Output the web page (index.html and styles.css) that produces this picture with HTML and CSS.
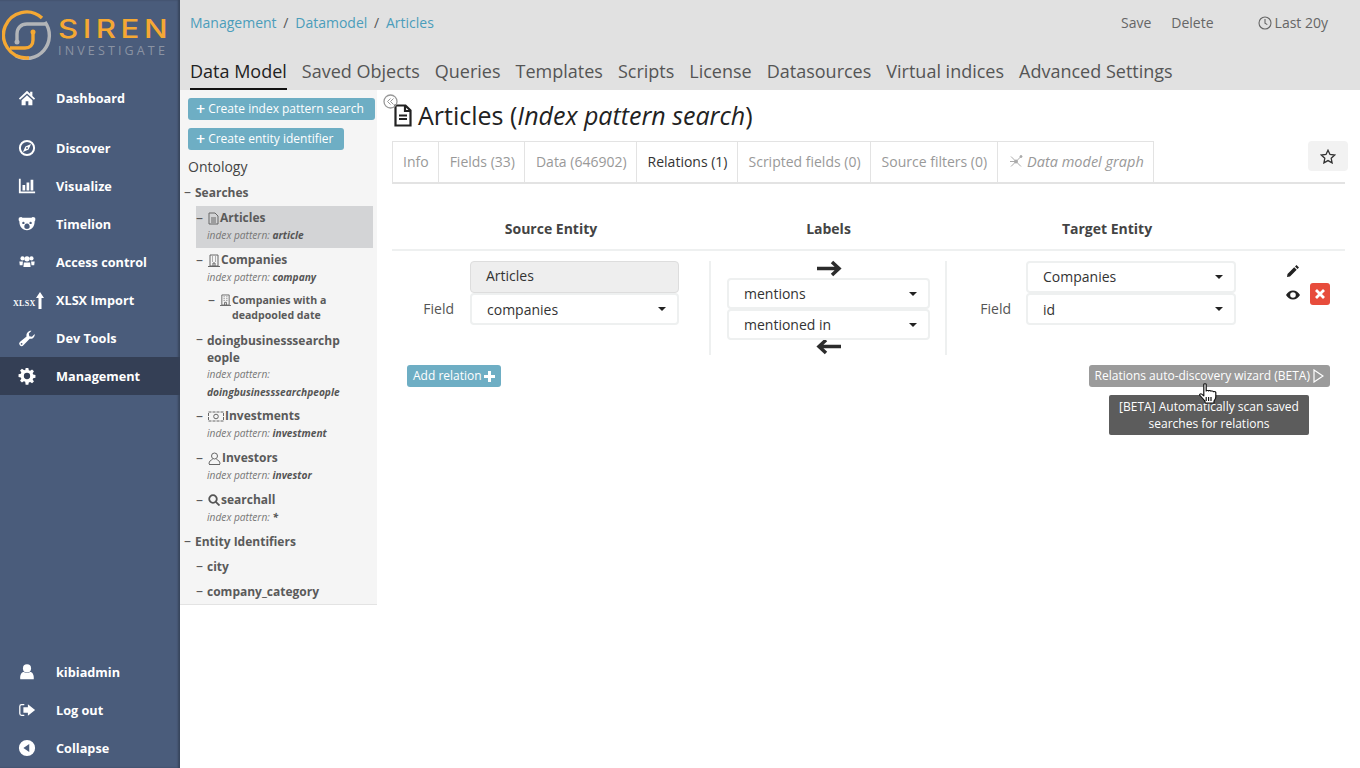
FILE: index.html
```html
<!DOCTYPE html>
<html lang="en">
<head>
<meta charset="UTF-8">
<title>Articles - Siren Investigate</title>
<link rel="stylesheet" href="styles.css">
</head>
<body>
<aside class="sidebar">
  <div class="logo">
    <svg class="logo-mark" width="50" height="50" viewBox="0 0 50 50" fill="none" stroke-width="3.400">
      <path d="M43 12A23 23 0 0 1 14 46" stroke="#b3b5b8"/>
      <path d="M40 8A23 23 0 1 0 24 48H27" stroke="#f5a833"/>
      <path d="M45 14H25C19 14 15 18 15 24V32" stroke="#b3b5b8"/>
      <path d="M31 22V30C31 35 28 38 23 38H8" stroke="#f5a833"/>
      <circle cx="31" cy="22" r="2.500" fill="#f5a833" stroke="none"/>
      <circle cx="15" cy="32" r="2.500" fill="#b3b5b8" stroke="none"/>
    </svg>
    <div class="logo-text">
      <div class="logo-siren">SIREN</div>
      <div class="logo-sub">INVESTIGATE</div>
    </div>
  </div>
  <nav class="nav-top">
    <a class="nav-item nav-first">
      <svg class="nav-icon" viewBox="0 0 20 20"><path d="M10 2 1 10.500 2.300 12 10 5l7.700 7L19 10.500 16 7.700V3h-2.500v2.400zM4 12.500V18h4.500v-4.500h3V18H16v-5.500L10 7z"/></svg>
      <span>Dashboard</span>
    </a>
    <a class="nav-item">
      <svg class="nav-icon" viewBox="0 0 20 20"><path fill-rule="evenodd" d="M10 1a9 9 0 1 1 0 18 9 9 0 0 1 0-18zm0 2.200a6.800 6.800 0 1 0 0 13.600 6.800 6.800 0 0 0 0-13.600zM14.500 5.500l-2.700 6.300-6.300 2.700 2.700-6.300zM10 9a1 1 0 1 0 0 2 1 1 0 0 0 0-2z"/></svg>
      <span>Discover</span>
    </a>
    <a class="nav-item">
      <svg class="nav-icon" viewBox="0 0 20 20"><path d="M1 2h2v14h16v2H1zM5 9h3v6H5zM9.500 6h3v9h-3zM14 3h3v12h-3z"/></svg>
      <span>Visualize</span>
    </a>
    <a class="nav-item">
      <svg class="nav-icon" viewBox="0 0 20 20"><path fill-rule="evenodd" d="M1 3c2-1 3-1 4 0h10c1-1 2-1 4 0 .5 2 .3 3-.5 4 0 6-3.500 10-8.500 10S1.500 13 1.500 7C.7 6 .5 5 1 3zm5 4.500a1.300 1.300 0 1 0 0 2.600 1.300 1.300 0 0 0 0-2.600zm8 0a1.300 1.300 0 1 0 0 2.600 1.300 1.300 0 0 0 0-2.600zM10 9.500c-2 0-3 2-3 3.500s1.500 2.500 3 2.500 3-1 3-2.500-1-3.500-3-3.500z"/></svg>
      <span>Timelion</span>
    </a>
    <a class="nav-item">
      <svg class="nav-icon" viewBox="0 0 20 20"><circle cx="5" cy="6" r="2.300"/><circle cx="15" cy="6" r="2.300"/><circle cx="10" cy="6.500" r="3"/><path d="M1.500 9.500h4l-.5 4H2zM14.500 9.500h4L18 13.500h-3zM6.500 10.500h7L14 15.500H6z"/></svg>
      <span>Access control</span>
    </a>
    <a class="nav-item">
      <span class="xlsx-icon"><span class="xlsx-text">XLSX</span><svg width="8" height="17" viewBox="0 0 8 17"><path d="M4 0 8 6H5.500V17h-3V6H0z"/></svg></span>
      <span>XLSX Import</span>
    </a>
    <a class="nav-item">
      <svg class="nav-icon" viewBox="0 0 20 20"><path fill-rule="evenodd" d="M18.500 5.500c.5 3-2 6-5.500 5.300L6 18a2.500 2.500 0 0 1-4-3.500l7.500-6.300C8.700 4.500 12 1.500 15 2l-3 3 .5 3 3 .5zM4 15.500a1 1 0 1 0 0 2 1 1 0 0 0 0-2z"/></svg>
      <span>Dev Tools</span>
    </a>
    <a class="nav-item nav-active">
      <svg class="nav-icon" viewBox="0 0 20 20"><path fill-rule="evenodd" d="M8.500 1h3l.5 2.500 1.500.6 2.100-1.400 2.100 2.100-1.400 2.100.6 1.500 2.500.5v3l-2.500.5-.6 1.500 1.400 2.100-2.100 2.100-2.100-1.400-1.500.6-.5 2.500h-3L8 16.500l-1.500-.6-2.100 1.400-2.100-2.100 1.400-2.100-.6-1.500L.6 11.100v-3l2.500-.5.6-1.500-1.400-2.100 2.100-2.100 2.100 1.400L8 3.500zM10 6.500a3.500 3.500 0 1 0 0 7 3.500 3.500 0 0 0 0-7z"/></svg>
      <span>Management</span>
    </a>
  </nav>
  <nav class="nav-bottom">
    <a class="nav-item">
      <svg class="nav-icon" viewBox="0 0 20 20"><circle cx="10" cy="6" r="4.500"/><path d="M2.500 18c-.5-5 1.500-8 4-8 2 1.500 5 1.500 7 0 2.500 0 4.500 3 4 8z"/></svg>
      <span>kibiadmin</span>
    </a>
    <a class="nav-item">
      <svg class="nav-icon" viewBox="0 0 20 20"><path d="M7 4H4a2 2 0 0 0-2 2v8a2 2 0 0 0 2 2h3" fill="none" stroke="#fff" stroke-width="1.400"/><path d="M11 3.500 19 10l-8 6.500V13H6V7h5z"/></svg>
      <span>Log out</span>
    </a>
    <a class="nav-item">
      <svg class="nav-icon" viewBox="0 0 20 20"><path fill-rule="evenodd" d="M10 1a9 9 0 1 1 0 18 9 9 0 0 1 0-18zm2.500 4.500L6 10l6.500 4.500z"/></svg>
      <span>Collapse</span>
    </a>
  </nav>
</aside>

<div class="content">
  <header class="topbar">
    <div class="topbar-row">
      <div class="breadcrumbs">
        <a>Management</a><span class="sep">/</span><a>Datamodel</a><span class="sep">/</span><a>Articles</a>
      </div>
      <div class="top-actions">
        <a>Save</a>
        <a>Delete</a>
        <a class="timepicker">
          <svg width="14" height="14" viewBox="0 0 14 14" fill="none" stroke="#666" stroke-width="1.100"><circle cx="7" cy="7" r="6"/><path d="M7 3v4.200l2.300 1.400"/></svg>
          Last 20y
        </a>
      </div>
    </div>
    <div class="section-tabs">
      <a class="section-active">Data Model</a>
      <a>Saved Objects</a>
      <a>Queries</a>
      <a>Templates</a>
      <a>Scripts</a>
      <a>License</a>
      <a>Datasources</a>
      <a>Virtual indices</a>
      <a>Advanced Settings</a>
    </div>
  </header>

  <div class="workspace">
    <div class="panel">
      <div class="panel-buttons">
        <button class="btn btn-blue"><span class="plus">+</span>Create index pattern search</button>
        <button class="btn btn-blue"><span class="plus">+</span>Create entity identifier</button>
      </div>
      <div class="ontology">Ontology</div>
      <div class="group-title"><span class="dash">&ndash;</span>Searches</div>
      <div class="node node-selected">
        <div class="node-name"><span class="dash">&ndash;</span><svg class="tree-icon" width="11" height="13" viewBox="0 0 11 13" fill="none" stroke="#666"><path d="M1 1h6l3 3v8H1zM3 6h5M3 8h5M3 10h5"/></svg>Articles</div>
        <div class="node-sub">index pattern: <b>article</b></div>
      </div>
      <div class="node node-parent">
        <div class="node-name"><span class="dash">&ndash;</span><svg class="tree-icon" width="12" height="13" viewBox="0 0 12 13" fill="none" stroke="#666"><path d="M2 1h8v11H2zM0 12.500h12M4 3h1M7 3h1M4 5h1M7 5h1M4 7h1M7 7h1M5 12v-3h2v3"/></svg>Companies</div>
        <div class="node-sub">index pattern: <b>company</b></div>
        <div class="child-name"><span class="dash">&ndash;</span><svg class="tree-icon child-icon" width="11" height="12" viewBox="0 0 12 13" fill="none" stroke="#666"><path d="M2 1h8v11H2zM0 12.500h12M4 3h1M7 3h1M4 5h1M7 5h1M4 7h1M7 7h1M5 12v-3h2v3"/></svg><span>Companies with a deadpooled date</span></div>
      </div>
      <div class="node node-long">
        <div class="node-name"><span class="dash">&ndash;</span><span>doingbusinesssearchp<br>eople</span></div>
        <div class="node-sub">index pattern:<br><b>doingbusinesssearchpeople</b></div>
      </div>
      <div class="node">
        <div class="node-name"><span class="dash">&ndash;</span><svg class="tree-icon" width="16" height="11" viewBox="0 0 16 11" fill="none" stroke="#666"><rect x=".5" y="1" width="15" height="9" stroke-dasharray="3 1"/><circle cx="8" cy="5.500" r="2.300"/></svg>Investments</div>
        <div class="node-sub">index pattern: <b>investment</b></div>
      </div>
      <div class="node">
        <div class="node-name"><span class="dash">&ndash;</span><svg class="tree-icon" width="13" height="13" viewBox="0 0 13 13" fill="none" stroke="#666"><circle cx="6.500" cy="4" r="3"/><path d="M1 12c0-3 2-4 3.500-4.500M12 12c0-3-2-4-3.500-4.500M1 12.500h11"/></svg>Investors</div>
        <div class="node-sub">index pattern: <b>investor</b></div>
      </div>
      <div class="node">
        <div class="node-name"><span class="dash">&ndash;</span><svg class="tree-icon" width="12" height="12" viewBox="0 0 12 12" fill="none" stroke="#555" stroke-width="1.800"><circle cx="5" cy="5" r="3.800"/><path d="M7.800 7.800 11.500 11.500"/></svg>searchall</div>
        <div class="node-sub">index pattern: <b>*</b></div>
      </div>
      <div class="group-title group-entity"><span class="dash">&ndash;</span>Entity Identifiers</div>
      <div class="leaf"><span class="dash">&ndash;</span>city</div>
      <div class="leaf"><span class="dash">&ndash;</span>company_category</div>
    </div>
    <svg class="panel-toggle" width="15" height="15" viewBox="0 0 15 15" fill="none" stroke="#999"><circle cx="7.500" cy="7.500" r="6.500" stroke-width="1.300"/><path d="M7.500 4.500 4.500 7.500l3 3M10.500 4.500l-3 3 3 3"/></svg>

    <main class="main">
      <h1 class="page-title">
        <svg width="18" height="23" viewBox="0 0 18 23" fill="none" stroke="#222" stroke-width="2.200"><path d="M1.500 1.500h10l5 5v15h-15zM11 1.500v5.500h5.500"/><path d="M5 11.500h8M5 15h8"/></svg>
        <span>Articles (<em>Index pattern search</em>)</span>
      </h1>
      <div class="tabs-row">
        <div class="tab tab-first">Info</div>
        <div class="tab">Fields (33)</div>
        <div class="tab">Data (646902)</div>
        <div class="tab tab-active">Relations (1)</div>
        <div class="tab">Scripted fields (0)</div>
        <div class="tab tab-filters">Source filters (0)</div>
        <div class="tab tab-graph">
          <svg width="14" height="13" viewBox="0 0 14 13" fill="none" stroke="#aaa"><path d="M2 1.500 12 11.500M2 11.500 12 1.500M7 6.500 1 6.500"/><circle cx="7" cy="6.500" r="1.500" fill="#aaa"/><circle cx="12" cy="1.500" r="1" fill="#aaa"/></svg>
          <em>Data model graph</em>
        </div>
        <button class="star-btn"><svg width="16" height="15" viewBox="0 0 16 15" fill="none" stroke="#333" stroke-width="1.300"><path d="M8 1.200 10 5.500l4.700.6-3.500 3.200.9 4.600L8 11.600l-4.100 2.300.9-4.600L1.300 6.100 6 5.500z"/></svg></button>
      </div>

      <div class="relation-head">
        <div>Source Entity</div>
        <div>Labels</div>
        <div>Target Entity</div>
        <div></div>
      </div>

      <div class="relation-row">
        <div class="entity-col source-col">
          <div></div>
          <div class="select select-static">Articles</div>
          <div class="field-label">Field</div>
          <div class="select">companies</div>
        </div>
        <div class="labels-col">
          <svg class="arrow arrow-out" width="26" height="16" viewBox="0 0 26 16" fill="none" stroke="#2b2b2b" stroke-width="3.500"><path d="M1 8h22M16 1.500 23 8l-7 6.500"/></svg>
          <div class="select select-small">mentions</div>
          <div class="select select-small">mentioned in</div>
          <svg class="arrow arrow-back" width="26" height="16" viewBox="0 0 26 16" fill="none" stroke="#2b2b2b" stroke-width="3.500"><path d="M25 8H3M10 1.500 3 8l7 6.500"/></svg>
        </div>
        <div class="entity-col target-col">
          <div></div>
          <div class="select select-top">Companies</div>
          <div class="field-label">Field</div>
          <div class="select">id</div>
        </div>
        <div class="actions-col">
          <div class="action-icons">
            <svg width="14" height="14" viewBox="0 0 14 14"><path fill="#222" d="M10.500 1 13 3.500 11.500 5 9 2.500zM8.200 3.300l2.500 2.500L4 12.500 1 13l.5-3z"/></svg>
            <svg width="14" height="14" viewBox="0 0 14 14"><path fill="#222" fill-rule="evenodd" d="M7 2.500c3 0 5.500 2 7 4.500-1.500 2.500-4 4.500-7 4.500S1.500 9.500 0 7c1.500-2.500 4-4.500 7-4.500zm0 1.700a2.800 2.800 0 1 0 0 5.600 2.800 2.800 0 0 0 0-5.600z"/></svg>
          </div>
          <button class="delete-btn"><svg width="10" height="10" viewBox="0 0 10 10" stroke="#fff" stroke-width="2.800"><path d="M1 1l8 8M9 1l-8 8"/></svg></button>
        </div>
      </div>

      <div class="relation-foot">
        <button class="btn btn-blue btn-add">Add relation<svg width="11" height="11" viewBox="0 0 11 11" stroke="#fff" stroke-width="3"><path d="M5.500 0v11M0 5.500h11"/></svg></button>
        <button class="btn btn-grey">Relations auto-discovery wizard (BETA)<svg width="11" height="14" viewBox="0 0 11 14" fill="none" stroke="#fff" stroke-width="1.200"><path d="M1 1l9 6-9 6z"/></svg></button>
        <div class="tooltip">[BETA] Automatically scan saved searches for relations</div>
        <svg class="cursor" width="18" height="21" viewBox="0 0 15 21" preserveAspectRatio="none"><path fill="#fff" stroke="#111" stroke-linejoin="round" d="M4 1.500c0-1 2-1 2 0V8c0-.8 2-.8 2 0 0-.8 2-.8 2 .3 0-.6 2-.6 2 .5 0-.5 2-.3 2 .8V14c0 2-1 3-1.500 4v2H5v-2L.8 12.500c-.8-1 .5-2.200 1.500-1.300L4 13z"/><path stroke="#111" d="M6 14v4M8 14v4M10 14v4"/></svg>
      </div>
    </main>
  </div>
</div>
</body>
</html>
```

FILE: styles.css
```css
* {
  box-sizing: border-box;
}

html, body {
  height: 100%;
}

body {
  margin: 0;
  display: flex;
  height: 100vh;
  overflow: hidden;
  font-family: "Open Sans", Arial, sans-serif;
  font-size: 14px;
  color: #333;
  background: #fff;
}

/* left navigation */
.sidebar {
  width: 180px;
  flex: none;
  display: flex;
  flex-direction: column;
  background: #4a5c7b;
  box-shadow: inset -2px 0 2px rgba(0, 0, 0, 0.25);
}

.logo {
  height: 79px;
  display: flex;
  padding: 10px 0 0 2px;
}

.logo-mark {
  flex: none;
}

.logo-text {
  margin-left: 6px;
}

.logo-siren {
  font-family: Inter, "Open Sans", sans-serif;
  font-size: 26px;
  font-weight: 500;
  line-height: 28px;
  margin-top: 5px;
  letter-spacing: 3.800px;
  color: #f5a833;
  transform: scaleX(1.2);
  transform-origin: left;
}

.logo-sub {
  font-size: 12.500px;
  line-height: 14px;
  margin-top: 1px;
  letter-spacing: 3.150px;
  color: #8a93a3;
}

.nav-item {
  height: 38px;
  display: flex;
  align-items: center;
  font-size: 12.700px;
  font-weight: 700;
  color: #fff;
}

.nav-item > span:last-child {
  margin-left: 20px;
}

.nav-first {
  margin-bottom: 12px;
}

.nav-active {
  background: #343f55;
}

.nav-icon {
  width: 18px;
  height: 18px;
  margin-left: 18px;
  flex: none;
  fill: #fff;
}

.xlsx-icon {
  width: 37px;
  margin-left: 13px;
  margin-right: -19px;
  display: flex;
  align-items: flex-end;
  fill: #fff;
}

.nav-item > .xlsx-icon + span {
  margin-left: 25px;
}

.xlsx-text {
  font-family: "Liberation Serif", serif;
  font-size: 8px;
  line-height: 10px;
  letter-spacing: 0.300px;
}

.nav-bottom {
  margin-top: auto;
  padding-bottom: 1px;
}

/* top bar */
.content {
  flex: 1;
  min-width: 0;
  display: flex;
  flex-direction: column;
}

.topbar {
  height: 90px;
  flex: none;
  padding: 0 32px 0 10px;
  background: #e1e1e1;
}

.topbar-row {
  height: 45px;
  display: flex;
  justify-content: space-between;
  align-items: center;
}

.breadcrumbs {
  color: #4b9dbb;
}

.sep {
  margin: 0 6.750px;
  color: #555;
}

.top-actions {
  display: flex;
  align-items: center;
  color: #666;
}

.top-actions a {
  margin-left: 20px;
}

.top-actions .timepicker {
  margin-left: 44px;
  display: flex;
  align-items: center;
  gap: 3px;
}

.section-tabs {
  display: flex;
  gap: 15px;
  font-size: 18px;
  color: #555;
}

.section-tabs a {
  height: 45px;
  padding-top: 13px;
  line-height: 27px;
}

.section-active {
  color: #222;
  border-bottom: 2px solid #111;
}

/* ontology panel */
.workspace {
  flex: 1;
  display: flex;
  position: relative;
  min-height: 0;
}

.panel {
  width: 197px;
  height: 515px;
  flex: none;
  padding-top: 8px;
  font-size: 12px;
  color: #5a5a5a;
  background: #f5f5f5;
  border-bottom: 1px solid #e3e3e3;
}

.panel-buttons {
  padding-left: 8px;
  display: flex;
  flex-direction: column;
  align-items: flex-start;
  gap: 8px;
}

.btn {
  height: 22px;
  padding: 0 6px;
  display: inline-flex;
  align-items: center;
  white-space: nowrap;
  border: 0;
  border-radius: 3px;
  font: 12px/22px "Open Sans", Arial, sans-serif;
  color: #fff;
}

.btn-blue {
  background: #6eaec4;
}

.panel-buttons .btn {
  padding: 0 11px 0 8px;
}

.plus {
  font-size: 16px;
  font-weight: 600;
  margin-right: 3px;
}

.ontology {
  margin: 7px 0 0 8px;
  font-size: 14px;
  line-height: 19px;
  color: #444;
}

.group-title {
  margin-top: 8px;
  padding-left: 4px;
  line-height: 18px;
  font-weight: 700;
}

.dash {
  display: inline-block;
  width: 11px;
  font-size: 14px;
  line-height: 14px;
  font-weight: 400;
  flex: none;
}

.node {
  margin: 0 4px 0 16px;
  padding: 3px 0;
}

.node-selected {
  margin-top: 4px;
  background: #d3d4d6;
}

.node-name {
  line-height: 18px;
  font-weight: 700;
  display: flex;
  align-items: center;
}

.tree-icon {
  margin: 0 1px;
  flex: none;
}

.node-sub {
  padding: 0 0 1px 11px;
  font-size: 10.200px;
  font-style: italic;
  line-height: 17px;
  color: #777;
}

.node-sub b {
  color: #555;
}

.node-parent {
  padding-bottom: 6px;
}

.child-name {
  display: flex;
  padding-left: 12px;
  margin-top: 6px;
  font-size: 10.600px;
  font-weight: 700;
  line-height: 15px;
}

.child-icon {
  margin-top: 1px;
}

.child-name > span:last-child {
  width: 105px;
}

.node-long {
  padding-top: 3px;
}

.node-long .node-name {
  align-items: flex-start;
  line-height: 17px;
}

.node-long .node-sub {
  padding-bottom: 0;
  line-height: 17.500px;
}

.group-entity {
  margin-top: 3px;
}

.leaf {
  margin-left: 16px;
  margin-top: 7px;
  line-height: 18px;
  font-weight: 700;
}

.panel-toggle {
  position: absolute;
  left: 203px;
  top: 4px;
}

/* main area */
.main {
  flex: 1;
  min-width: 0;
  padding: 0 15px;
}

.page-title {
  margin: 9px 0 10px;
  padding-left: 2px;
  display: flex;
  align-items: center;
  gap: 6px;
  font-size: 25px;
  font-weight: 400;
  line-height: 32px;
  color: #222;
}

.tabs-row {
  height: 43px;
  display: flex;
  border-bottom: 2px solid #e3e3e3;
}

.tab {
  height: 41px;
  padding: 0 9px 2px 11px;
  display: flex;
  align-items: center;
  gap: 4px;
  border: 1px solid #e3e3e3;
  border-left: 0;
  border-bottom: 0;
  color: #999;
}

.tab-first {
  padding: 0 9px 2px 10px;
  border-left: 1px solid #e3e3e3;
}

.tab-active {
  height: 43px;
  color: #333;
  background: #fff;
  border-bottom: 2px solid #e3e3e3;
}

.tab-filters {
  padding-right: 10px;
}

.tab-graph em {
  font-size: 14.500px;
}

.star-btn {
  width: 40px;
  height: 30px;
  margin-left: auto;
  margin-right: -3px;
  padding: 0;
  display: flex;
  align-items: center;
  justify-content: center;
  border: 0;
  border-radius: 4px;
  background: #f2f2f2;
}

.relation-head {
  display: grid;
  grid-template-columns: 318px 237px 320px 1fr;
  padding: 35px 0 10px;
  border-bottom: 2px solid #eef0f0;
  line-height: 20px;
  font-weight: 700;
  text-align: center;
  color: #444;
}

.relation-row {
  display: grid;
  grid-template-columns: 319px 236px 320px 1fr;
  margin-top: 10px;
}

.entity-col {
  display: grid;
  align-content: start;
  grid-template-rows: 32px 32px;
  padding-right: 30px;
}

.source-col {
  grid-template-columns: 78px 1fr;
  border-right: 2px solid #eef0f0;
  height: 94px;
}

.target-col {
  grid-template-columns: 79px 210px;
  padding-right: 0;
}

.field-label {
  padding-right: 16px;
  line-height: 32px;
  text-align: right;
  color: #555;
}

.target-col .field-label {
  padding-right: 15px;
}

.select {
  position: relative;
  height: 32px;
  padding-left: 15px;
  line-height: 29px;
  border: 2px solid #eef0f0;
  border-radius: 4px;
  background: #fff;
}

.select::after {
  content: "";
  position: absolute;
  right: 11px;
  top: 12px;
  border: 4px solid transparent;
  border-top-color: #222;
  border-bottom: 0;
}

.select-static {
  padding-left: 15px;
  background: #eee;
  border: 1px solid #ddd;
  line-height: 28px;
}

.select-static::after {
  display: none;
}

.select-top {
  line-height: 27px;
}

.labels-col {
  display: flex;
  flex-direction: column;
  align-items: center;
  padding: 0 15px 0 16px;
  border-right: 2px solid #eef0f0;
  height: 94px;
}

.arrow {
  flex: none;
  height: 17px;
}

.arrow-out {
  margin: -1px 0 1px;
}

.arrow-back {
  margin-top: -2px;
}

.select-small {
  width: 100%;
  height: 31px;
  padding-left: 15px;
  line-height: 27px;
}

.actions-col {
  display: flex;
  padding-left: 19px;
}

.action-icons {
  display: flex;
  flex-direction: column;
  gap: 10px;
  padding-top: 3px;
}

.delete-btn {
  width: 20px;
  height: 22px;
  margin: 22px 0 0 10px;
  padding: 0;
  border: 0;
  border-radius: 3px;
  background: #e74c3c;
}

.relation-foot {
  position: relative;
  display: flex;
  justify-content: space-between;
  margin-top: 10px;
  padding: 0 15px;
}

.btn-add {
  gap: 2px;
}

.btn-grey {
  gap: 3px;
  padding-left: 6px;
  background: #9b9b9b;
}

.tooltip {
  position: absolute;
  right: 36px;
  top: 30px;
  width: 200px;
  padding: 3px 8px;
  border-radius: 2px;
  font-size: 12px;
  line-height: 17px;
  text-align: center;
  color: #fff;
  background: #5c5c5c;
}

.cursor {
  position: absolute;
  right: 128px;
  top: 18px;
}
```
